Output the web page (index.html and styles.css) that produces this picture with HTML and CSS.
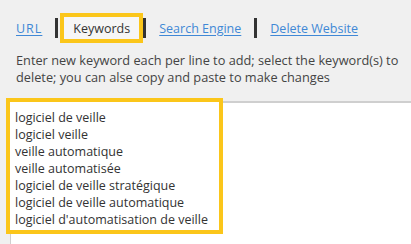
FILE: index.html
```html
<!DOCTYPE html>
<html>
<head>
<meta charset="utf-8">
<link rel="stylesheet" href="styles.css">
</head>
<body>
<div class="page">
  <nav class="tabs">
    <a class="tab-link tab-url" href="#">URL</a>
    <span class="sep"></span>
    <span class="tab-active">Keywords</span>
    <span class="sep"></span>
    <a class="tab-link" href="#">Search Engine</a>
    <span class="sep"></span>
    <a class="tab-link" href="#">Delete Website</a>
  </nav>
  <p class="help">Enter new keyword each per line to add; select the keyword(s) to<br>delete; you can alse copy and paste to make changes</p>
  <div class="editor">
    <div class="keywords">
      <div class="kw">logiciel de veille</div>
      <div class="kw">logiciel veille</div>
      <div class="kw">veille automatique</div>
      <div class="kw">veille automatisée</div>
      <div class="kw">logiciel de veille stratégique</div>
      <div class="kw">logiciel de veille automatique</div>
      <div class="kw">logiciel d'automatisation de veille</div>
    </div>
  </div>
</div>
</body>
</html>
```
FILE: styles.css
```css
html, body {
  margin: 0;
  padding: 0;
  background: #f0f0f0;
}
body {
  font-family: "Open Sans", "Noto Sans", sans-serif;
  font-size: 12.5px;
  color: #3a3a3a;
  width: 411px;
  height: 244px;
  overflow: hidden;
}
.page {
  display: flex;
  flex-direction: column;
  height: 244px;
}
.tabs {
  display: flex;
  align-items: center;
  padding: 13px 0 0 16px;
  height: 30px;
}
.tab-link {
  color: #4088d6;
  text-decoration: underline;
  text-underline-offset: 2px;
}
.tab-url {
  letter-spacing: 1px;
}
.sep {
  width: 3px;
  height: 20px;
  background: #333;
  margin: 0 13px;
}
.tab-active {
  box-sizing: border-box;
  height: 30px;
  display: flex;
  align-items: center;
  border: 4px solid #fbc61a;
  background: #f6f6f6;
  padding: 1px 9px 0;
  margin: 0 -13px 0 -11px;
  color: #333;
}
.help {
  margin: 9px 0 0 16px;
  font-size: 12.75px;
  line-height: 17px;
  color: #444;
}
.editor {
  flex: 1;
  margin: 15px 0 0 10px;
  background: #fff;
  border-top: 2px solid #cfcfcf;
  border-left: 1px solid #cfcfcf;
}
.keywords {
  display: inline-block;
  margin: -5px 0 0 -5px;
  border: 4px solid #fbc61a;
  padding: 7px 11px 2px 5px;
  background: #fff;
  line-height: 17px;
  color: #333;
}
```
